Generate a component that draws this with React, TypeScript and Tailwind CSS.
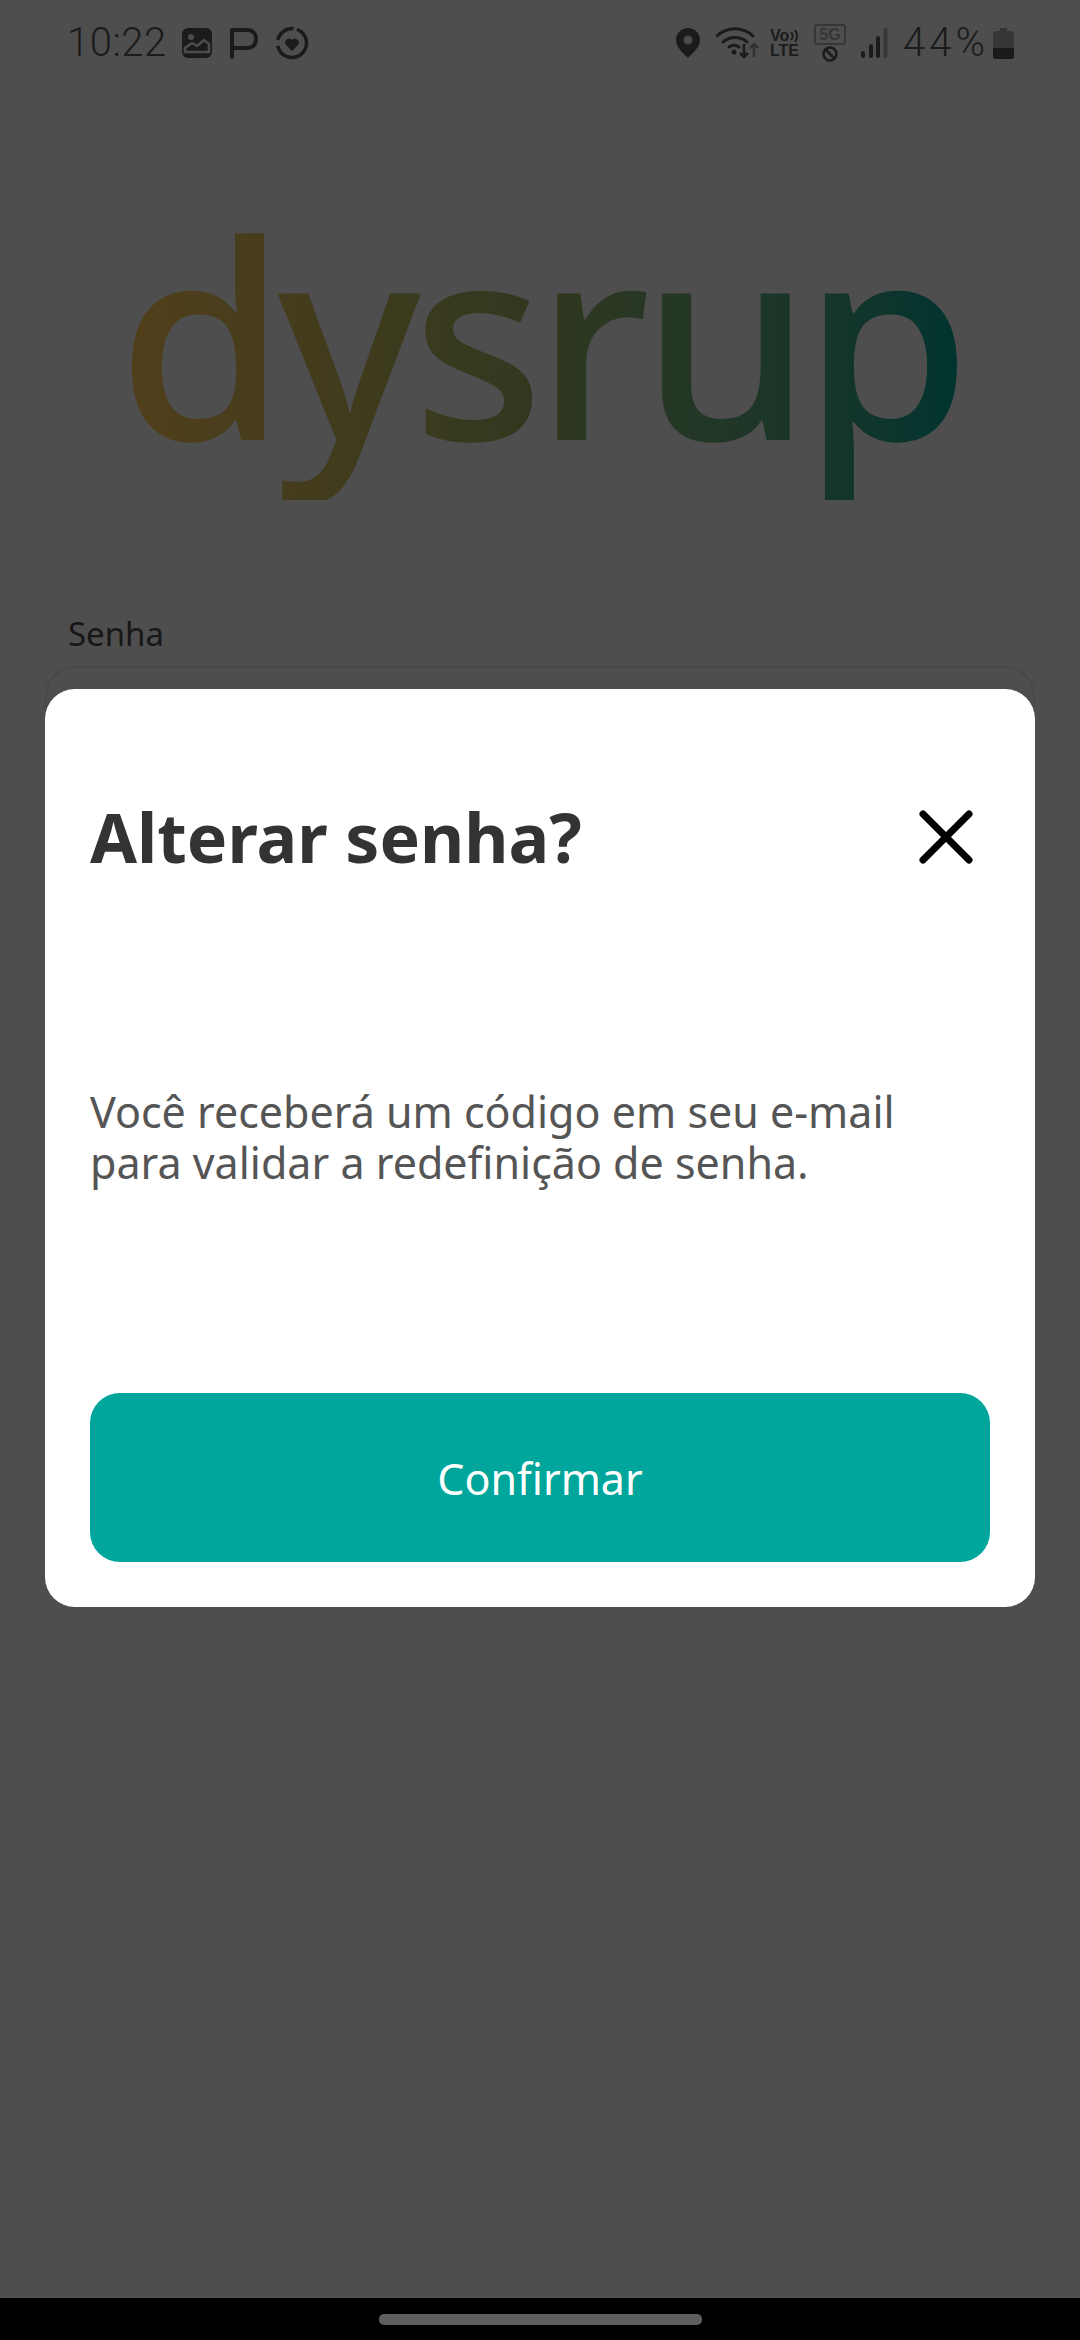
const uiFont = "font-['Noto_Sans','Open_Sans',sans-serif]";

const StatusBar = () => {
  return (
    <div className="flex h-[88px] w-full shrink-0 items-center justify-between pb-[2px] pl-[67px] pr-[66px] text-[#1b1b1b]">
      <div className="flex items-center">
        <span className="w-[105px] font-['Roboto',sans-serif] text-[40px] leading-none font-light tracking-[0.5px]">10:22</span>
        <svg width="32" height="32" viewBox="0 0 32 32" className="ml-[9px]">
          <rect x="1" y="1" width="30" height="30" rx="6" fill="#1b1b1b" />
          <circle cx="10" cy="10" r="3" fill="#4c4c4c" />
          <path d="M4 25v-4l7-5 5 3 7-6 5 4v8z" fill="none" stroke="#4c4c4c" strokeWidth="2.5" />
        </svg>
        <svg width="30" height="32" viewBox="0 0 30 32" className="ml-[16px]">
          <path d="M3 30V3h16a8 8 0 0 1 8 8v2a8 8 0 0 1-8 8H3" fill="none" stroke="#1b1b1b" strokeWidth="4" strokeLinecap="round" strokeLinejoin="round" />
        </svg>
        <svg width="34" height="34" viewBox="0 0 34 34" className="ml-[16px]">
          <circle cx="17" cy="17" r="14.5" fill="none" stroke="#1b1b1b" strokeWidth="3.5" strokeDasharray="60 6 21 4" transform="rotate(-70 17 17)" />
          <path d="M17 25l-6.5-6.5a4 4 0 0 1 6.5-4.5 4 4 0 0 1 6.5 4.5z" fill="#1b1b1b" />
        </svg>
      </div>
      <div className="flex items-center">
        <svg width="24" height="30" viewBox="0 0 24 30">
          <path d="M12 0a12 12 0 0 1 12 12c0 7-7 13-12 18C7 25 0 19 0 12A12 12 0 0 1 12 0z" fill="#1b1b1b" />
          <circle cx="12" cy="12" r="4.5" fill="#4c4c4c" />
        </svg>
        <svg width="45" height="32" viewBox="0 0 45 32" fill="none" className="ml-[16px]">
          <path d="M1 9a26 26 0 0 1 36 0" stroke="#1b1b1b" strokeWidth="3" strokeLinecap="round" />
          <path d="M7 15a18 18 0 0 1 24 0" stroke="#1b1b1b" strokeWidth="3" strokeLinecap="round" />
          <path d="M13 20a9 9 0 0 1 10 0" stroke="#1b1b1b" strokeWidth="3" strokeLinecap="round" />
          <circle cx="18" cy="25" r="2.5" fill="#1b1b1b" />
          <path d="M28 17v13m-4-4 4 4 4-4" stroke="#1b1b1b" strokeWidth="2.5" />
          <path d="M38 30V17m-4 4 4-4 4 4" stroke="#333" strokeWidth="2.5" />
        </svg>
        <div className="ml-[9px] flex w-[32px] flex-col font-['Liberation_Sans',sans-serif] text-[16px] leading-[15px] font-bold">
          <div className="flex items-center">
            <span>Vo</span>
            <svg width="10" height="14" viewBox="0 0 10 14" fill="none">
              <path d="M2 3a6 6 0 0 1 0 8M6 1a10 10 0 0 1 0 12" stroke="#1b1b1b" strokeWidth="2" />
            </svg>
          </div>
          <span>LTE</span>
        </div>
        <div className="ml-[12px] flex w-[32px] flex-col items-center">
          <span className="flex h-[21px] w-[32px] items-center justify-center rounded-[3px] border-2 border-[#363636] font-['Liberation_Sans',sans-serif] text-[16px] leading-none font-bold text-[#363636]">5G</span>
          <svg width="16" height="16" viewBox="0 0 16 16" fill="none" className="mt-[1px]">
            <circle cx="8" cy="8" r="6.5" stroke="#1b1b1b" strokeWidth="2.5" />
            <path d="M3.5 3.5l9 9" stroke="#1b1b1b" strokeWidth="2.5" />
          </svg>
        </div>
        <svg width="28" height="30" viewBox="0 0 28 30" className="ml-[14px]">
          <rect x="1" y="23" width="4" height="7" rx="2" fill="#1b1b1b" />
          <rect x="9" y="16" width="4" height="14" rx="2" fill="#1b1b1b" />
          <rect x="16" y="8" width="4" height="22" rx="2" fill="#1b1b1b" />
          <rect x="23.5" y="0" width="4" height="30" rx="2" fill="#363636" />
        </svg>
        <span className="ml-[15px] w-[82px] font-['Roboto',sans-serif] text-[40px] leading-none font-light tracking-[4px]">44%</span>
        <svg width="21" height="31" viewBox="0 0 21 31" className="ml-[8px]">
          <path d="M7 0h7v3h4a3 3 0 0 1 3 3v22a3 3 0 0 1-3 3H3a3 3 0 0 1-3-3V6a3 3 0 0 1 3-3h4z" fill="#363636" />
          <path d="M0 20h21v8a3 3 0 0 1-3 3H3a3 3 0 0 1-3-3z" fill="#1b1b1b" />
        </svg>
      </div>
    </div>
  );
};

const Logo = () => {
  return (
    <div className="flex h-[370px] w-full shrink-0 justify-center">
      <span className="mt-[82px] h-[330px] bg-linear-to-r from-[#523f1a] via-[#30381f] to-[#00342f] bg-clip-text font-['Noto_Sans',sans-serif] text-[272px] leading-[330px] font-medium tracking-[-9px] text-transparent">
        dysrup
      </span>
    </div>
  );
};

const ConfirmModal = () => {
  return (
    <div className={`absolute top-[689px] left-[45px] flex h-[918px] w-[990px] flex-col rounded-[30px] bg-white px-[45px] pt-[106px] pb-[45px] ${uiFont}`}>
      <div className="flex items-center justify-between">
        <h2 className="text-[68px] leading-[84px] font-bold text-[#333333]">Alterar senha?</h2>
        <svg width="54" height="54" viewBox="0 0 54 54" fill="none" className="mr-[17px]">
          <path d="M4 4l46 46M50 4L4 50" stroke="#000000" strokeWidth="7" strokeLinecap="round" />
        </svg>
      </div>
      <p className="mt-[207px] text-[43px] leading-[51px] text-[#555555]">
        Você receberá um código em seu e-mail
        <br />
        para validar a redefinição de senha.
      </p>
      <button className="mt-auto flex h-[169px] w-[900px] items-center justify-center rounded-[30px] bg-[#00a59b] pt-[3px] text-[43px] text-white">
        Confirmar
      </button>
    </div>
  );
};

export default function App() {
  return (
    <div className="relative flex h-[2340px] w-[1080px] flex-col overflow-hidden bg-[#4e4e4e]">
      <StatusBar />
      <Logo />
      <div className={`flex flex-1 flex-col px-[45px] pt-[154px] ${uiFont}`}>
        <label className="pl-[23px] text-[33px] leading-[44px] text-[#171717]">Senha</label>
        <div className="mt-[10px] h-[120px] rounded-[30px] border-2 border-[#484848]" />
      </div>
      <div className="flex h-[42px] w-full shrink-0 justify-center bg-black pt-[16px]">
        <div className="h-[11px] w-[323px] rounded-[5px] bg-[#5f5f5f]" />
      </div>
      <ConfirmModal />
    </div>
  );
}
